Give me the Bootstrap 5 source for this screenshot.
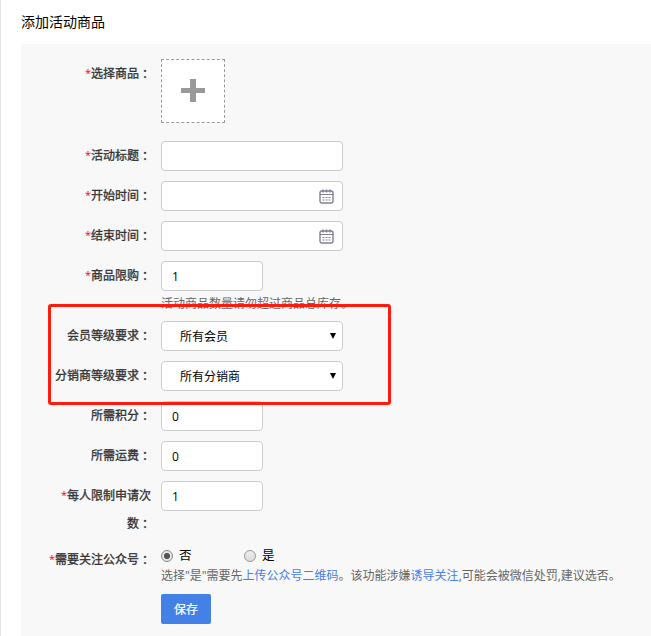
<!DOCTYPE html>
<html lang="zh-CN">
<head>
<meta charset="utf-8">
<meta name="viewport" content="width=device-width, initial-scale=1">
<title>添加活动商品</title>
<link href="https://cdn.jsdelivr.net/npm/bootstrap@5.3.0/dist/css/bootstrap.min.css" rel="stylesheet">
<style>
  body { font: 12px/20px "Open Sans", "Noto Sans CJK SC", sans-serif; color: #000; background: #fff; }
  .page { height: 636px; border-left: 1px solid #e3e3e3; padding-left: 20px; }
  .page-title { font-size: 14px; line-height: 20px; padding: 12px 0; height: 44px; font-weight: 400; }
  .panel { background: #f8f8f8; padding-top: 15px; height: 592px; }
  .field { gap: 10px; }
  .field-rows { gap: 10px; }
  .picker-row { padding-bottom: 18px; }
  .follow-row { padding-top: 7px; }
  .field-label { width: 130px; padding-top: 1px; line-height: 28px; color: #333; -webkit-text-stroke: .3px #333; text-align: right; flex: none; }
  .req { color: #f00; font-size: 11px; line-height: 1; vertical-align: 1px; -webkit-text-stroke: 0; }
  .colon { font-family: "Noto Sans CJK TC", sans-serif; line-height: 1; vertical-align: -1px; }
  .picker { width: 64px; height: 64px; border: 1px dashed #999; background: #fff; }
  .panel .form-control, .panel .form-select { height: 30px; width: 182px; border: 1px solid #ccc; border-radius: 4px; background-color: #fff; font-size: 12px; line-height: 18px; color: #000; padding: 5px 10px; }
  .panel .form-control.narrow { width: 102px; }
  .panel .form-select { padding: 6px 10px 4px 18px; background-image: none; }
  .cal { right: 9px; top: 8px; }
  .arrow { right: 7px; top: 12px; }
  .hint { color: #666; line-height: 20px; white-space: nowrap; }
  .hint a { color: #4381e6; text-decoration: none; }
  .limit-hint { height: 30px; padding-top: 3px; }
  .panel .dot { width: 12px; height: 12px; margin: 0; border: 1px solid #999; background: linear-gradient(#eee, #ddd); flex: none; }
  .panel .dot:checked { background: radial-gradient(circle, #555 0 2.7px, #e6e6e6 3.5px); border-color: #888; }
  .choice { height: 21px; font-size: 12.5px; line-height: 20px; gap: 6px; }
  .choice-no { width: 83px; }
  .save { width: 50px; height: 30px; padding: 2px 0 0; border: 0; border-radius: 2px; background: #4381e6; color: #fff; font-size: 12px; -webkit-text-stroke: .2px #fff; }
  .highlight { left: 48px; top: 304px; width: 343px; height: 101px; border: 3px solid #ff1b0f; border-radius: 3px; pointer-events: none; }
</style>
</head>
<body class="overflow-hidden position-relative">
<main class="page">
  <h1 class="page-title m-0">添加活动商品</h1>
  <form class="panel">
    <div class="field picker-row d-flex">
      <label class="field-label"><span class="req">*</span>选择商品<span class="colon" lang="zh-TW">：</span></label>
      <button type="button" class="picker d-flex align-items-center justify-content-center p-0" aria-label="选择商品">
        <svg width="24" height="24" viewBox="0 0 24 24"><path d="M9 0h6v9h9v5h-9v9H9v-9H0V9h9z" fill="#999"/></svg>
      </button>
    </div>
    <div class="field-rows d-flex flex-column">
      <div class="field d-flex"><label class="field-label"><span class="req">*</span>活动标题<span class="colon" lang="zh-TW">：</span></label><input class="form-control" type="text"></div>
      <div class="field d-flex"><label class="field-label"><span class="req">*</span>开始时间<span class="colon" lang="zh-TW">：</span></label>
        <div class="position-relative"><input class="form-control" type="text"><svg class="cal position-absolute" width="15" height="15" viewBox="0 0 15 15"><rect x="1" y="2" width="13" height="12" rx="2" fill="none" stroke="#808090" stroke-width="1.4"/><path d="M1 5.5h13" stroke="#808090"/><path d="M4 .5v3M7.5.5v3M11 .5v3" stroke="#808090" stroke-width="1.5"/><path d="M3.5 8.5h2m1 0h2m1 0h2M3.5 11h2m1 0h2m1 0h2" stroke="#808090" stroke-width="1.2"/></svg></div></div>
      <div class="field d-flex"><label class="field-label"><span class="req">*</span>结束时间<span class="colon" lang="zh-TW">：</span></label>
        <div class="position-relative"><input class="form-control" type="text"><svg class="cal position-absolute" width="15" height="15" viewBox="0 0 15 15"><rect x="1" y="2" width="13" height="12" rx="2" fill="none" stroke="#808090" stroke-width="1.4"/><path d="M1 5.5h13" stroke="#808090"/><path d="M4 .5v3M7.5.5v3M11 .5v3" stroke="#808090" stroke-width="1.5"/><path d="M3.5 8.5h2m1 0h2m1 0h2M3.5 11h2m1 0h2m1 0h2" stroke="#808090" stroke-width="1.2"/></svg></div></div>
      <div class="field d-flex"><label class="field-label"><span class="req">*</span>商品限购<span class="colon" lang="zh-TW">：</span></label>
        <div><input class="form-control narrow" type="text" value="1"><div class="hint limit-hint mb-n2">活动商品数量请勿超过商品总库存。</div></div></div>
    </div>
    <div class="field-rows d-flex flex-column">
      <div class="field d-flex"><label class="field-label">会员等级要求<span class="colon" lang="zh-TW">：</span></label>
        <div class="position-relative"><select class="form-select"><option>所有会员</option></select><svg class="arrow position-absolute" width="6" height="6"><path d="M0 0h6L3 6z"/></svg></div></div>
      <div class="field d-flex"><label class="field-label">分销商等级要求<span class="colon" lang="zh-TW">：</span></label>
        <div class="position-relative"><select class="form-select"><option>所有分销商</option></select><svg class="arrow position-absolute" width="6" height="6"><path d="M0 0h6L3 6z"/></svg></div></div>
      <div class="field d-flex"><label class="field-label">所需积分<span class="colon" lang="zh-TW">：</span></label><input class="form-control narrow" type="text" value="0"></div>
      <div class="field d-flex"><label class="field-label">所需运费<span class="colon" lang="zh-TW">：</span></label><input class="form-control narrow" type="text" value="0"></div>
      <div class="field d-flex"><label class="field-label"><span class="req">*</span>每人限制申请次<br>数<span class="colon" lang="zh-TW">：</span></label><input class="form-control narrow" type="text" value="1"></div>
    </div>
    <div class="field follow-row d-flex">
      <label class="field-label"><span class="req">*</span>需要关注公众号<span class="colon" lang="zh-TW">：</span></label>
      <div>
        <div class="d-flex">
          <label class="choice choice-no d-flex align-items-center"><input class="form-check-input dot" type="radio" name="follow" checked><span>否</span></label>
          <label class="choice d-flex align-items-center"><input class="form-check-input dot" type="radio" name="follow"><span>是</span></label>
        </div>
        <div class="hint">选择"是"需要先<a href="#">上传公众号二维码</a>。该功能涉嫌<a href="#">诱导关注</a>,可能会被微信处罚,建议选否。</div>
        <button type="button" class="btn save mt-2">保存</button>
      </div>
    </div>
  </form>
</main>
<div class="highlight position-absolute"></div>
</body>
</html>
